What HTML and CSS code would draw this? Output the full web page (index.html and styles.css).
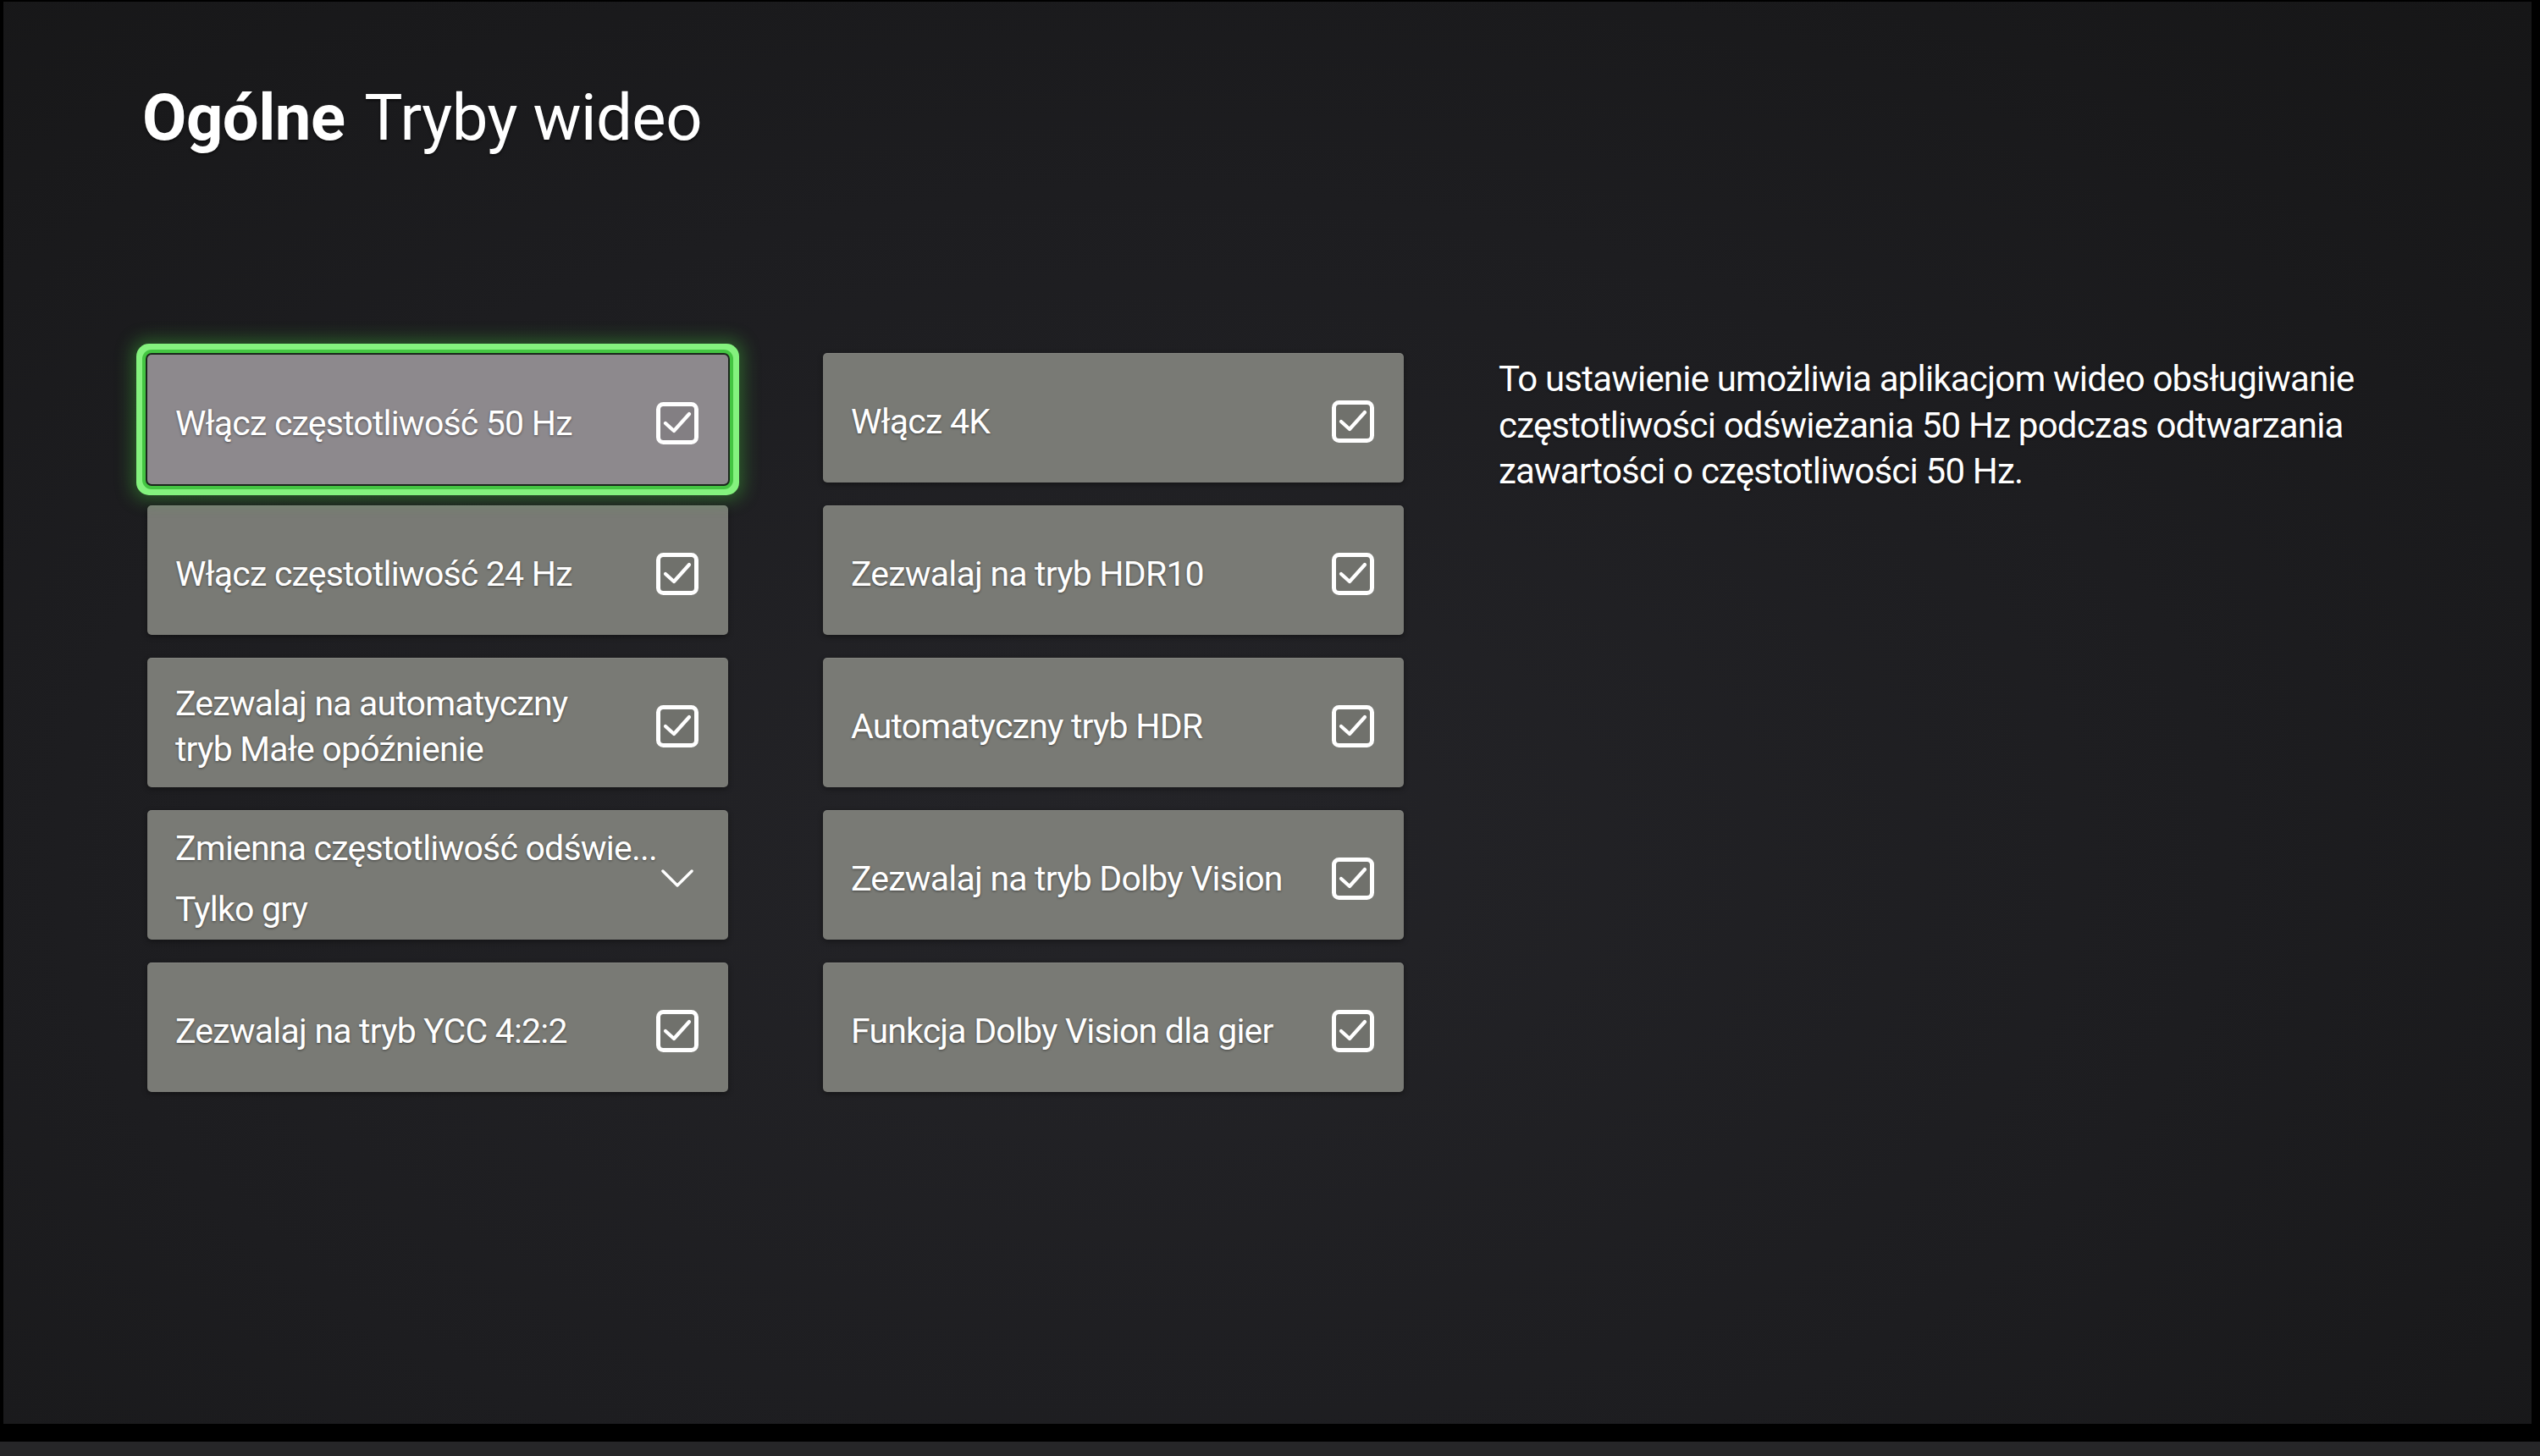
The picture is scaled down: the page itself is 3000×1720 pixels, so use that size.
FILE: index.html
```html
<!DOCTYPE html>
<html>
<head>
<title>Tryby wideo</title>
<meta charset="UTF-8">
<meta name="viewport" content="width=device-width, initial-scale=1.0">
<link rel="stylesheet" href="styles.css">
</head>
<body>
<div class="screen">
<h1 class="title"><b>Ogólne</b> Tryby wideo</h1>
<div class="layout">
<div class="tile focused">
<span class="label">Włącz częstotliwość 50 Hz</span>
<svg class="box" viewBox="0 0 50 50"><rect x="2.5" y="2.5" width="45" height="45" rx="6"/><path d="M11 25 L21 34 L39 14"/></svg>
</div>
<div class="tile">
<span class="label">Włącz 4K</span>
<svg class="box" viewBox="0 0 50 50"><rect x="2.5" y="2.5" width="45" height="45" rx="6"/><path d="M11 25 L21 34 L39 14"/></svg>
</div>
<div class="tile">
<span class="label">Włącz częstotliwość 24 Hz</span>
<svg class="box" viewBox="0 0 50 50"><rect x="2.5" y="2.5" width="45" height="45" rx="6"/><path d="M11 25 L21 34 L39 14"/></svg>
</div>
<div class="tile">
<span class="label">Zezwalaj na tryb HDR10</span>
<svg class="box" viewBox="0 0 50 50"><rect x="2.5" y="2.5" width="45" height="45" rx="6"/><path d="M11 25 L21 34 L39 14"/></svg>
</div>
<div class="tile">
<span class="label">Zezwalaj na automatyczny<br>tryb Małe opóźnienie</span>
<svg class="box" viewBox="0 0 50 50"><rect x="2.5" y="2.5" width="45" height="45" rx="6"/><path d="M11 25 L21 34 L39 14"/></svg>
</div>
<div class="tile">
<span class="label">Automatyczny tryb HDR</span>
<svg class="box" viewBox="0 0 50 50"><rect x="2.5" y="2.5" width="45" height="45" rx="6"/><path d="M11 25 L21 34 L39 14"/></svg>
</div>
<div class="tile dropdown">
<div class="label">
<span>Zmienna częstotliwość odświe...</span>
<span>Tylko gry</span>
</div>
<svg class="chevron" viewBox="0 0 40 22"><path d="M2 2 L20 20 L38 2"/></svg>
</div>
<div class="tile">
<span class="label">Zezwalaj na tryb Dolby Vision</span>
<svg class="box" viewBox="0 0 50 50"><rect x="2.5" y="2.5" width="45" height="45" rx="6"/><path d="M11 25 L21 34 L39 14"/></svg>
</div>
<div class="tile">
<span class="label">Zezwalaj na tryb YCC 4:2:2</span>
<svg class="box" viewBox="0 0 50 50"><rect x="2.5" y="2.5" width="45" height="45" rx="6"/><path d="M11 25 L21 34 L39 14"/></svg>
</div>
<div class="tile">
<span class="label">Funkcja Dolby Vision dla gier</span>
<svg class="box" viewBox="0 0 50 50"><rect x="2.5" y="2.5" width="45" height="45" rx="6"/><path d="M11 25 L21 34 L39 14"/></svg>
</div>
<p class="desc">To ustawienie umożliwia aplikacjom wideo obsługiwanie<br>częstotliwości odświeżania 50 Hz podczas odtwarzania<br>zawartości o częstotliwości 50 Hz.</p>
</div>
</div>
<div class="bezel"></div>
</body>
</html>
```

FILE: styles.css
```css
body{
    margin: 0;
    background: #000;
    font-family: Roboto, "Noto Sans", sans-serif;
    color: #fff;
}
.screen{
    width: 2986px;
    height: 1680px;
    margin: 2px 10px 0 4px;
    background: radial-gradient(ellipse at 45% 60%, #242428 0%, #1d1d20 55%, #161617 100%);
    padding: 0 0 0 164px;
    box-sizing: border-box;
    overflow: hidden;
}
.title{
    margin: 0;
    padding-top: 92px;
    font-size: 76px;
    line-height: 90px;
    font-weight: 400;
    letter-spacing: -0.5px;
    text-shadow: 0 2px 3px rgba(0,0,0,0.6);
}
.title b{
    font-weight: 700;
    margin-right: 6px;
}
.layout{
    display: grid;
    grid-template-columns: 686px 686px 1fr;
    grid-auto-rows: 153px;
    column-gap: 112px;
    row-gap: 27px;
    margin-top: 233px;
    margin-left: 6px;
}
.tile{
    background: #797a75;
    border-radius: 5px;
    display: flex;
    align-items: center;
    justify-content: space-between;
    padding: 8px 35px 0 33px;
    box-shadow: inset 0 1px 0 rgba(255,255,255,0.08), 0 2px 6px rgba(0,0,0,0.4);
}
.tile.focused{
    background: #8d898d;
    box-shadow: 0 0 0 2px #1a261b, 0 0 0 6px #44c542, 0 0 0 13px #84f27e, 0 0 20px 18px rgba(70,210,60,0.35);
    position: relative;
    top: 2px;
}
.label{
    font-size: 41px;
    line-height: 54px;
    letter-spacing: -0.8px;
    white-space: nowrap;
    text-shadow: 0 1px 3px rgba(0,0,0,0.45);
}
.dropdown .label{
    display: flex;
    flex-direction: column;
    gap: 18px;
}
.box{
    width: 50px;
    height: 50px;
    flex: none;
}
.box rect{
    fill: rgba(0,0,0,0.07);
    stroke: #fff;
    stroke-width: 5;
}
.box path{
    fill: none;
    stroke: #fff;
    stroke-width: 4.2;
    stroke-linecap: round;
    stroke-linejoin: round;
}
.chevron{
    width: 38px;
    height: 21px;
    flex: none;
    margin-right: 6px;
}
.chevron path{
    fill: none;
    stroke: #fff;
    stroke-width: 3.5;
    stroke-linecap: round;
    stroke-linejoin: round;
}
.desc{
    grid-column: 3;
    grid-row: 1 / span 5;
    margin: 4px 0 0 0;
    font-size: 42px;
    line-height: 54.5px;
    letter-spacing: -0.8px;
    white-space: nowrap;
    text-shadow: 0 1px 3px rgba(0,0,0,0.6);
}
.bezel{
    height: 17px;
    margin-top: 21px;
    background: #262628;
}
```
